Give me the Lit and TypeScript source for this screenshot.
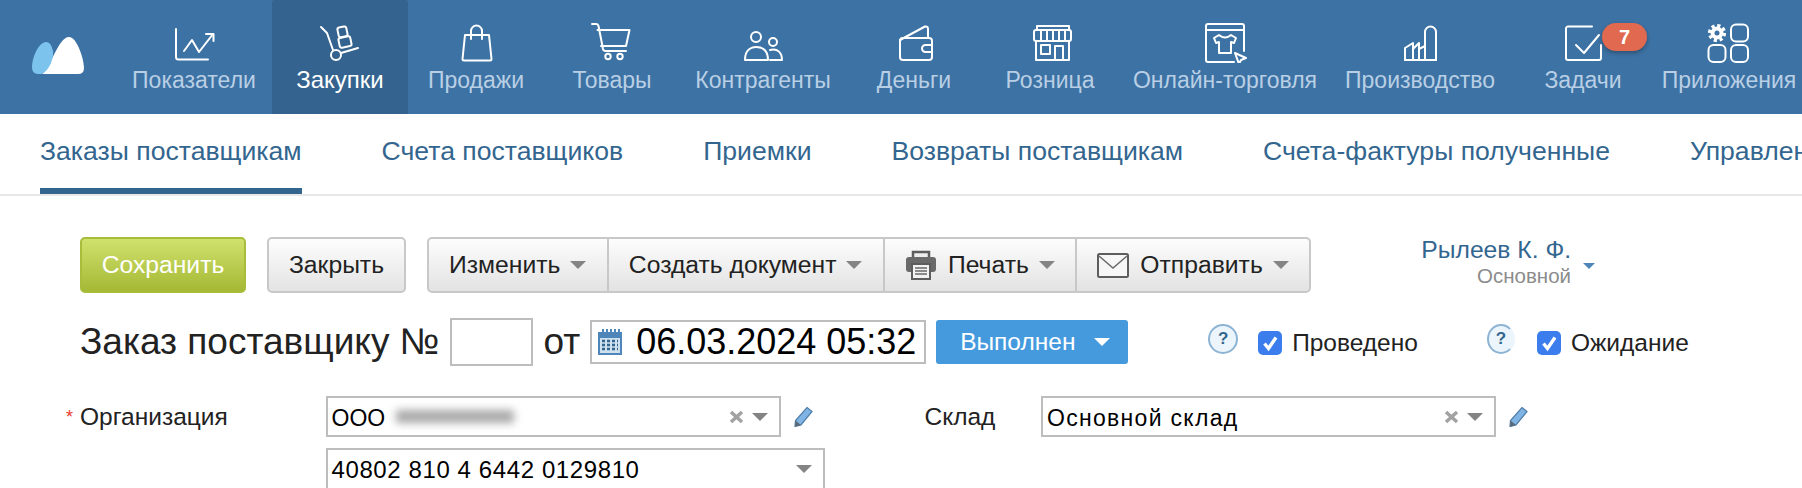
import { LitElement, html, svg, css } from 'lit';
import { customElement } from 'lit/decorators.js';

const ICONS = {
  metrics: svg`<path d="M4 6V34a2.500 2.500 0 0 0 2.500 2.500H36"/><path d="M12 28L20 17L27 29L41 11"/><path d="M34 11H41.500V18"/>`,
  purchases: svg`<path d="M3 4L9 10L15 27"/><circle cx="18" cy="32" r="5"/><path d="M23 30L40 25"/><rect x="20" y="4" width="9" height="10" rx="2" transform="rotate(-12 24 9)"/><rect x="21" y="14" width="12" height="10" rx="2" transform="rotate(-12 27 19)"/>`,
  sales: svg`<path d="M11 12H35L37.500 36a1.500 1.500 0 0 1-1.500 1.500H10a1.500 1.500 0 0 1-1.500-1.500Z"/><path d="M17 16V8a5.500 5.500 0 0 1 11 0V16"/>`,
  goods: svg`<path d="M2 1H6.500Q8 1 8.500 3L13 26Q13.500 28 15.500 28H36"/><path d="M7.500 7H39.500L36 23H11"/><circle cx="18" cy="33.500" r="2.700"/><circle cx="30" cy="33.500" r="2.700"/>`,
  partners: svg`<circle cx="15" cy="14" r="5"/><path d="M4 37C4 29 8 24 15.500 24C23 24 27 29 27 37Z"/><circle cx="32" cy="19" r="4"/><path d="M29 27C37 25 41 30 41 37H29"/>`,
  money: svg`<rect x="8" y="15" width="32" height="22" rx="3"/><path d="M8 17L33 3.500Q36 3 36 6V15"/><path d="M40 22H33.500a3.500 3.500 0 0 0 0 7H40"/>`,
  retail: svg`<rect x="9" y="3" width="32" height="4"/><rect x="6" y="7" width="37" height="11" rx="2"/><path d="M13 7V18M19 7V18M25 7V18M31 7V18M37 7V18"/><path d="M8 18V37H41V18"/><rect x="13" y="22" width="9" height="9"/><path d="M27 37V23H35V37"/>`,
  online: svg`<path d="M31 39H5a2 2 0 0 1-2-2V3a2 2 0 0 1 2-2H39a2 2 0 0 1 2 2V28"/><path d="M3 7H41"/><path d="M16 12L11 15L13 20L16 19V30H28V19L31 20L33 15L28 12Q22 17 16 12Z"/><path d="M32 30L43 35L38 37L36 41Z"/>`,
  production: svg`<path d="M7 37V25L15 20V26L21 20V26L27 23"/><path d="M15 37V26M21 37V26"/><path d="M27 37V9a5.500 5.500 0 0 1 11 0V37Z"/><path d="M7 37H38"/>`,
  tasks: svg`<path d="M31 3.500H7a2 2 0 0 0-2 2V35a2 2 0 0 0 2 2H38a2 2 0 0 0 2-2V22"/><path d="M15 22L23 30L38 12"/>`,
  apps: svg`<circle cx="10" cy="10" r="6.500" fill="#fff" stroke="none"/><circle cx="10" cy="10" r="7.500" stroke-width="3.200" stroke-dasharray="3.200 2.690" stroke-linecap="butt"/><circle cx="10" cy="10" r="2.500" fill="#3d72a4" stroke="none"/><rect x="24" y="1.500" width="17" height="17" rx="5"/><rect x="1.500" y="22" width="17" height="17" rx="5"/><rect x="24" y="22" width="17" height="17" rx="5"/>`,
};

const NAV = [
  { label: 'Показатели', icon: ICONS.metrics },
  { label: 'Закупки', icon: ICONS.purchases, active: true },
  { label: 'Продажи', icon: ICONS.sales },
  { label: 'Товары', icon: ICONS.goods },
  { label: 'Контрагенты', icon: ICONS.partners },
  { label: 'Деньги', icon: ICONS.money },
  { label: 'Розница', icon: ICONS.retail },
  { label: 'Онлайн-торговля', icon: ICONS.online },
  { label: 'Производство', icon: ICONS.production },
  { label: 'Задачи', icon: ICONS.tasks, badge: '7' },
  { label: 'Приложения', icon: ICONS.apps },
];

const SUBNAV = ['Заказы поставщикам', 'Счета поставщиков', 'Приемки', 'Возвраты поставщикам', 'Счета-фактуры полученные', 'Управление закупками'];

const caret = html`<span class="caret"></span>`;
const pencil = html`<svg class="pencil" width="22" height="21" viewBox="0 0 22 21">
  <path d="M15 1.500L20 5.500L9 19L3 20.500L3.500 14.500Z" fill="#7fb4e4" stroke="#4f7ea8" stroke-width="1.200"/>
  <path d="M3.500 14.500L9 19L3 20.500Z" fill="#5b6a78"/>
</svg>`;
const clear = html`<svg class="clear" width="15" height="14" viewBox="0 0 15 14"><path d="M2 2L13 12M13 2L2 12" stroke="#a2a2a2" stroke-width="3.500"/></svg>`;
const check = html`<span class="check"><svg width="24" height="24" viewBox="0 0 24 24"><path d="M6.500 12.500L10.500 17.500L18 6.500" fill="none" stroke="#fff" stroke-width="3.400"/></svg></span>`;

@customElement('app-root')
export class AppRoot extends LitElement {
  static styles = css`
    :host {
      display: block;
      width: 1802px;
      height: 488px;
      overflow: hidden;
      background: #fff;
      font-family: 'Liberation Sans', Arial, sans-serif;
      color: #222;
    }

    .nav {
      display: grid;
      grid-template-columns: 116px 156px 136px 136px 136px 166px 136px 136px 214px 176px 150px 142px;
      height: 114px;
      background: #3d72a4;
    }

    .logo {
      padding: 37px 0 0 32px;
    }

    .nav-item {
      position: relative;
      display: flex;
      flex-direction: column;
      align-items: center;
      padding-top: 23px;
      font-size: 23px;
      color: #b9cfe5;
      white-space: nowrap;
    }

    .nav-item.active {
      background: #33638e;
      color: #fff;
      font-size: 24px;
      border-radius: 3px 3px 0 0;
    }

    .nav-item svg {
      fill: none;
      stroke: #fff;
      stroke-width: 2;
      stroke-linejoin: round;
      stroke-linecap: round;
    }

    .nav-label {
      margin-top: 5px;
      line-height: 24px;
    }

    .badge {
      position: absolute;
      top: 23px;
      left: 94px;
      width: 45px;
      height: 28px;
      border-radius: 14px;
      background: #e0694f;
      box-shadow: 0 2px 4px rgba(0, 0, 0, 0.3);
      color: #fff;
      font-size: 20px;
      font-weight: 700;
      line-height: 28px;
      text-align: center;
    }

    .subnav {
      display: flex;
      gap: 80px;
      height: 80px;
      padding-left: 40px;
      border-bottom: 2px solid #e8e8e8;
      white-space: nowrap;
    }

    .subnav a {
      height: 74px;
      line-height: 75px;
      font-size: 26.600px;
      color: #33668f;
    }

    .subnav a.active {
      border-bottom: 6px solid #33668f;
    }

    .toolbar {
      display: flex;
      align-items: flex-start;
      margin-top: 41px;
      padding-left: 80px;
      font-size: 24.700px;
    }

    .btn {
      display: flex;
      align-items: center;
      box-sizing: border-box;
      height: 56px;
      border: 2px solid #c8c8c8;
      border-radius: 5px;
      background: linear-gradient(#fdfdfd, #e3e3e3);
      color: #222;
      white-space: nowrap;
    }

    .save {
      justify-content: center;
      width: 166px;
      border-color: #a8bd3c;
      background: linear-gradient(#d0e16c, #a5b935);
      color: #fff;
    }

    .close {
      justify-content: center;
      width: 139px;
      margin-left: 21px;
    }

    .group {
      margin-left: 21px;
    }

    .group-item {
      display: flex;
      align-items: center;
      box-sizing: border-box;
      height: 100%;
      padding: 0 20.500px 0 20px;
      border-left: 2px solid #c8c8c8;
    }

    .group-item:first-child {
      border-left: none;
    }

    .group-item svg {
      margin-right: 11px;
    }

    .caret {
      width: 0;
      height: 0;
      margin-left: 10px;
      border-left: 8px solid transparent;
      border-right: 8px solid transparent;
      border-top: 8px solid #848484;
    }

    .user {
      display: flex;
      align-items: flex-start;
      margin-left: 110px;
    }

    .user-text {
      text-align: right;
      line-height: 26px;
      color: #33668f;
    }

    .user-role {
      font-size: 20.500px;
      color: #8c8c8c;
    }

    .user-caret {
      width: 0;
      height: 0;
      margin: 26px 0 0 12px;
      border-left: 6.500px solid transparent;
      border-right: 6.500px solid transparent;
      border-top: 6px solid #4f86ba;
    }

    .title-row {
      display: flex;
      align-items: center;
      height: 48px;
      margin-top: 25px;
      padding-left: 80px;
      font-size: 24.500px;
      white-space: nowrap;
    }

    .title {
      font-size: 37px;
    }

    .number {
      box-sizing: border-box;
      width: 83px;
      height: 48px;
      margin-left: 11px;
      border: 2px solid #bdbdbd;
    }

    .from {
      margin-left: 10px;
      font-size: 37px;
    }

    .date {
      display: flex;
      align-items: center;
      box-sizing: border-box;
      width: 336px;
      height: 44px;
      margin-left: 10px;
      padding-left: 6px;
      border: 2px solid #bdbdbd;
      font-size: 36px;
      color: #000;
    }

    .date svg {
      margin-right: 14px;
    }

    .status {
      display: flex;
      align-items: center;
      box-sizing: border-box;
      width: 192px;
      height: 44px;
      margin-left: 10px;
      padding-left: 24px;
      border-radius: 3px;
      background: #459ade;
      color: #fff;
    }

    .status .caret {
      margin-left: 19px;
      border-top-color: #fff;
    }

    .help {
      box-sizing: border-box;
      flex: none;
      width: 30px;
      height: 30px;
      margin: 0 0 6px 80px;
      border: 2px solid #8db4d4;
      border-radius: 50%;
      background: #ecf5fb;
      color: #33668f;
      font-size: 17px;
      font-weight: 700;
      line-height: 26px;
      text-align: center;
    }

    .help.second {
      width: 28px;
      margin-left: 69px;
      border-right-color: transparent;
    }

    .check {
      flex: none;
      width: 24px;
      height: 24px;
      margin: 2px 10px 0 20px;
      border-radius: 5px;
      background: #3b7ded;
    }

    .help.second + .check {
      margin-left: 22px;
    }

    .check svg {
      display: block;
    }

    .check-label {
      padding-top: 2px;
    }

    .form {
      display: flex;
      align-items: flex-start;
      margin-top: 30px;
      padding-left: 66px;
      font-size: 24.500px;
    }

    .form-label {
      display: flex;
      height: 41px;
      line-height: 42px;
    }

    .org-label {
      width: 259.500px;
    }

    .store-label {
      width: 116.500px;
      margin-left: 100px;
    }

    .star {
      width: 14px;
      color: #e8392b;
      font-size: 18px;
    }

    .fields {
      display: flex;
      flex-direction: column;
      gap: 11px;
      width: 499px;
    }

    .field-row {
      display: flex;
      align-items: center;
      gap: 11px;
    }

    .field {
      display: flex;
      align-items: center;
      box-sizing: border-box;
      width: 455px;
      height: 41px;
      padding: 0 11px 0 4px;
      border: 2px solid #bdbdbd;
      font-size: 23px;
      color: #000;
      white-space: nowrap;
    }

    .field-text {
      padding-top: 3px;
    }

    .field.wide {
      width: 499px;
      height: 60px;
      padding-bottom: 19px;
      font-size: 24px;
      letter-spacing: 0.600px;
    }

    .store-value {
      letter-spacing: 1.300px;
    }

    .field .spacer {
      flex: 1;
    }

    .field .clear {
      margin-right: 8px;
    }

    .field .caret {
      margin-left: 0;
    }

    .blurred {
      width: 118px;
      height: 13px;
      margin: 0 0 0 11px;
      background: #a8a8a8;
      filter: blur(4px);
    }

    .pencil {
      flex: none;
    }
  `;

  render() {
    return html`
      <div class="nav">
        <div class="logo">
          <svg width="52" height="37" viewBox="0 0 52 37">
            <path d="M37 0C45 0 52 22 52 31Q52 37 46 37H10C18 33 26 0 37 0Z" fill="#fff"/>
            <path d="M14 5C7 5 0 20 0 30Q0 37 6 37H10C18 33 22 20 21 14Q19 5 14 5Z" fill="#7cc3ee"/>
          </svg>
        </div>
        ${NAV.map(item => html`
          <div class="nav-item ${item.active ? 'active' : ''}">
            <svg width="44" height="40" viewBox="0 0 44 40">${item.icon}</svg>
            <span class="nav-label">${item.label}</span>
            ${item.badge ? html`<span class="badge">${item.badge}</span>` : ''}
          </div>
        `)}
      </div>

      <div class="subnav">
        ${SUBNAV.map((label, i) => html`<a class=${i === 0 ? 'active' : ''}>${label}</a>`)}
      </div>

      <div class="toolbar">
        <div class="btn save">Сохранить</div>
        <div class="btn close">Закрыть</div>
        <div class="btn group">
          <div class="group-item">Изменить${caret}</div>
          <div class="group-item">Создать документ${caret}</div>
          <div class="group-item">
            <svg width="32" height="30" viewBox="0 0 32 30">
              <path d="M8 7V2H24V7" fill="#eee" stroke="#5d5d5d" stroke-width="2.500"/>
              <rect x="1" y="7" width="30" height="15" rx="3" fill="#6a6a6a"/>
              <rect x="7" y="14" width="18" height="15" fill="#f2f2f2" stroke="#5d5d5d" stroke-width="2"/>
              <path d="M10 18H22M10 21H22M10 24H22" stroke="#6a6a6a" stroke-width="1.500"/>
            </svg>
            Печать${caret}
          </div>
          <div class="group-item">
            <svg width="32" height="25" viewBox="0 0 32 25">
              <rect x="1" y="1" width="30" height="23" rx="1.500" fill="#f6f6f6" stroke="#5d5d5d" stroke-width="2"/>
              <path d="M2 3L16 15L30 3" fill="none" stroke="#6a6a6a" stroke-width="1.500"/>
            </svg>
            Отправить${caret}
          </div>
        </div>
        <div class="user">
          <div class="user-text">
            <div>Рылеев К. Ф.</div>
            <div class="user-role">Основной</div>
          </div>
          <span class="user-caret"></span>
        </div>
      </div>

      <div class="title-row">
        <span class="title">Заказ поставщику №</span>
        <span class="number"></span>
        <span class="from">от</span>
        <span class="date">
          <svg width="24" height="26" viewBox="0 0 24 26">
            <path d="M5 0V5M9 0V5M13 0V5M17 0V5M21 0V5" stroke="#4f86ba" stroke-width="2"/>
            <rect x="0" y="3" width="24" height="23" fill="#4f86ba"/>
            <rect x="2" y="9" width="20" height="15" fill="#cfe0ef"/>
            <path d="M4 12H20M4 16H20M4 20H20" stroke="#33668f" stroke-width="2.500" stroke-dasharray="3 2"/>
          </svg>
          06.03.2024 05:32
        </span>
        <span class="status">Выполнен${caret}</span>
        <span class="help">?</span>
        ${check}
        <span class="check-label">Проведено</span>
        <span class="help second">?</span>
        ${check}
        <span class="check-label">Ожидание</span>
      </div>

      <div class="form">
        <div class="form-label org-label"><span class="star">*</span>Организация</div>
        <div class="fields">
          <div class="field-row">
            <div class="field"><span class="field-text">ООО</span><span class="blurred"></span><span class="spacer"></span>${clear}${caret}</div>
            ${pencil}
          </div>
          <div class="field wide"><span class="field-text">40802 810 4 6442 0129810</span><span class="spacer"></span>${caret}</div>
        </div>
        <div class="form-label store-label">Склад</div>
        <div class="field-row">
          <div class="field"><span class="field-text store-value">Основной склад</span><span class="spacer"></span>${clear}${caret}</div>
          ${pencil}
        </div>
      </div>
    `;
  }
}

declare global {
  interface HTMLElementTagNameMap {
    'app-root': AppRoot;
  }
}
